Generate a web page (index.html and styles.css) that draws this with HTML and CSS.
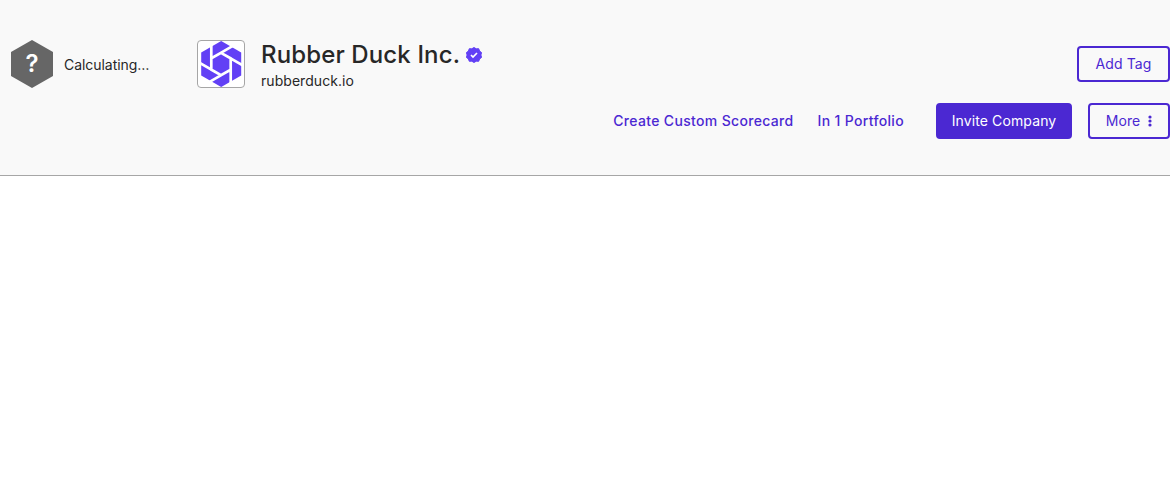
FILE: index.html
```html
<!DOCTYPE html>
<html lang="en">
<head>
<meta charset="utf-8">
<title>Rubber Duck Inc.</title>
<link rel="stylesheet" href="styles.css">
</head>
<body>
<header class="header">
  <div class="grade">
    <svg class="grade-icon" viewBox="0 0 48 48"><path fill="#666" d="M24 0l21 12v24L24 48 3 36V12z"/><text class="grade-mark" x="24" y="32">?</text></svg>
    <span class="grade-label">Calculating…</span>
  </div>
  <div class="logo">
    <svg width="46" height="46" viewBox="0 0 46 46"><path fill="#6240f5" d="M23.200 0l20 11.500v23l-20 11.500-20-11.500v-23z"/><path fill="none" stroke="#fff" stroke-width="2.700" d="M23 11.800l9.700 5.600v11.200L23 34.200l-9.700-5.600V17.400zM13.300 28.600V3M13.300 17.400L37 3.700M23 11.800l23 13.300M32.700 17.400V43M32.700 28.600L9 42.300M23 34.200L0 20.900"/></svg>
  </div>
  <div class="main">
    <div class="top">
      <div class="identity">
        <h1 class="name">Rubber Duck Inc.
          <svg class="verified" viewBox="0 0 16 16"><path fill="#6240f5" stroke="#6240f5" stroke-linejoin="round" d="M8 .5l2.200 1.300 2.500-.1.900 2.400 2 1.500-.7 2.400.7 2.400-2 1.500-.9 2.400-2.500-.1L8 15.500l-2.200-1.300-2.500.1-.9-2.400-2-1.500.7-2.400-.7-2.400 2-1.500.9-2.400 2.500.1z"/><path d="M5 8l2 2 4-4" fill="none" stroke="#fff" stroke-width="1.700"/></svg>
        </h1>
        <div class="domain">rubberduck.io</div>
      </div>
      <button class="button outline">Add Tag</button>
    </div>
    <div class="actions">
      <a class="link">Create Custom Scorecard</a>
      <a class="link">In 1 Portfolio</a>
      <button class="button primary">Invite Company</button>
      <button class="button outline more">More <svg class="dots" viewBox="0 0 4 12"><circle cx="2" cy="2" r="1.600"/><circle cx="2" cy="6" r="1.600"/><circle cx="2" cy="10" r="1.600"/></svg></button>
    </div>
  </div>
</header>
</body>
</html>
```
FILE: styles.css
```css
* { box-sizing: border-box; }
body { margin: 0; background: #fff; color: #272727; font: 14px/20px Inter, sans-serif; }
.header { display: flex; height: 176px; padding-top: 40px; background: #f9f9f9; border-bottom: 1px solid #a6a6a6; }
.grade { display: flex; align-items: center; gap: 8px; width: 189px; height: 48px; padding-left: 8px; }
.grade-icon { width: 48px; height: 48px; }
.grade-mark { fill: #fff; font: 600 24px Inter, sans-serif; text-anchor: middle; }
.grade-label { padding-top: 2px; letter-spacing: -.05px; }
.logo { width: 48px; height: 48px; margin: 0 16px 0 8px; border: 1px solid #a6a6a6; border-radius: 4px; background: #fff; }
.logo svg { display: block; }
.main { flex: 1; }
.top { display: flex; justify-content: space-between; align-items: flex-start; height: 63px; }
.name { display: flex; align-items: center; gap: 6px; margin: 0; font-size: 24px; line-height: 30px; font-weight: 450; letter-spacing: .13px; }
.verified { width: 16px; height: 16px; }
.domain { margin-top: 1px; letter-spacing: .05px; }
.button { height: 36px; padding: 0; border: 2px solid #4b28d2; border-radius: 4px; font: 400 14px/20px Inter, sans-serif; letter-spacing: .12px; }
.outline { color: #4b28d2; background: transparent; }
.top .button { width: 93px; margin-top: 6px; }
.primary { width: 136px; margin-left: 8px; color: #fff; background: #4b28d2; }
.actions { display: flex; align-items: center; justify-content: flex-end; }
.link { margin-right: 24px; color: #4b28d2; font-weight: 500; letter-spacing: .33px; }
.more { display: flex; align-items: center; justify-content: center; gap: 8px; width: 82px; margin-left: 16px; }
.dots { width: 4px; height: 12px; fill: #4b28d2; }
```
